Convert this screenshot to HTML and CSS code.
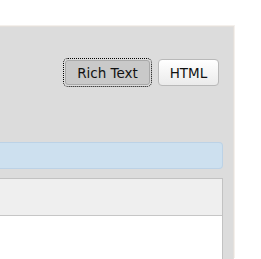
FILE: index.html
```html
<!DOCTYPE html>
<html lang="en">
<head>
    <meta charset="UTF-8">
    <title>Editor</title>
    <link rel="stylesheet" href="styles.css">
</head>
<body>
    <div class="panel">
        <div class="mode-bar">
            <button class="mode-btn active">Rich Text</button>
            <button class="mode-btn">HTML</button>
        </div>
        <div class="notice"></div>
        <div class="editor">
            <div class="editor-toolbar"></div>
            <div class="editor-body"></div>
        </div>
    </div>
</body>
</html>
```

FILE: styles.css
```css
* {
    box-sizing: border-box;
}

body {
    margin: 0;
    background: #fff;
    font-family: 'DejaVu Sans', sans-serif;
    overflow: hidden;
}

.panel {
    margin: 26px 0 0 -10px;
    width: 244px;
    height: 233px;
    background: #dcdcdc;
    border: 1px solid #e4e0dc;
    border-left: none;
    border-bottom: none;
    box-shadow: 1px -1px 0 #f4f0ec;
    padding: 31px 10px 0 0;
}

.mode-bar {
    display: flex;
    justify-content: flex-end;
    align-items: center;
    gap: 8px;
    padding-right: 4px;
    height: 29px;
}

.mode-btn {
    font-family: 'DejaVu Sans', sans-serif;
    font-size: 13.5px;
    color: #111;
    height: 27px;
    width: 61px;
    padding: 0;
    border: 1px solid #b9b9b9;
    border-radius: 4px;
    background: linear-gradient(#ffffff, #ebebeb);
}

.mode-btn.active {
    height: 25px;
    width: 85px;
    background: #c9c9c9;
    border-color: #a9a9a9;
    border-radius: 3px;
    outline: 1px dotted #000;
    outline-offset: 1px;
}

.notice {
    margin-top: 55px;
    height: 27px;
    background: #cde0ef;
    border: 1px solid #bcd2e6;
    border-left: none;
    border-radius: 0 4px 4px 0;
}

.editor {
    margin-top: 9px;
    height: 81px;
    border: 1px solid #c2c2c2;
    border-left: none;
    border-bottom: none;
    background: #fff;
}

.editor-toolbar {
    height: 37px;
    background: #efefef;
    border-bottom: 1px solid #c6c6c6;
}
```
